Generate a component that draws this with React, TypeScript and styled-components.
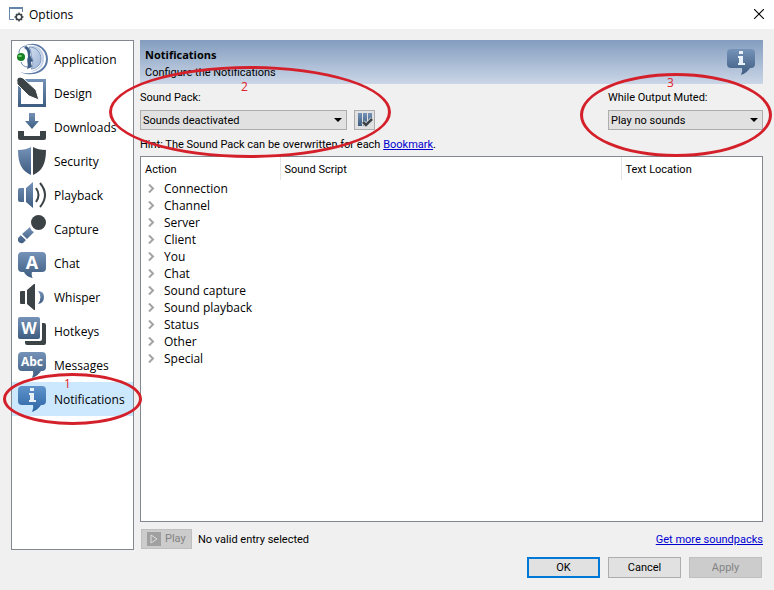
import React, { useState } from "react";
import styled, { createGlobalStyle } from "styled-components";

const STEEL = "url(#steel)";
const DARK = "#3c4347";

const GlobalStyle = createGlobalStyle`
  * { box-sizing: border-box; }
  body {
    margin: 0;
    background: #f0f0f0;
    color: #000;
    font: 11px/14px Roboto, "Open Sans", sans-serif;
  }
  button, select { font: inherit; color: inherit; }
`;

const uiFont = `"Open Sans", "Noto Sans", sans-serif`;

const Window = styled.div`
  min-height: 100vh;
  display: flex;
  flex-direction: column;
`;

const TitleBar = styled.header`
  display: flex;
  align-items: center;
  gap: 5px;
  height: 29px;
  padding: 0 10px 0 9px;
  background: #fff;
`;

const Title = styled.h1`
  flex: 1;
  margin: 0;
  font-family: ${uiFont};
  font-size: 12px;
  font-weight: 400;
`;

const CloseButton = styled.button`
  display: flex;
  padding: 0 0 2px;
  border: 0;
  background: none;
`;

const Body = styled.div`
  flex: 1;
  display: flex;
  gap: 6px;
  padding: 11px 11px 0;
`;

const Sidebar = styled.nav`
  flex: 0 0 123px;
  padding-top: 1px;
  border: 1px solid #828790;
  background: #fff;
  font-family: ${uiFont};
  font-size: 12px;
`;

const NavItem = styled.button<{ $active?: boolean }>`
  position: relative;
  display: flex;
  align-items: center;
  gap: 6px;
  width: 100%;
  height: 34px;
  padding: 0 0 0 4px;
  border: 0;
  background: ${(p) => (p.$active ? "#cce8ff" : "transparent")};
  text-align: left;
`;

const NavLabel = styled.span`
  padding-top: 2px;
`;

const Main = styled.main`
  flex: 1;
  min-width: 0;
  display: flex;
  flex-direction: column;
`;

const Banner = styled.div`
  display: flex;
  justify-content: space-between;
  align-items: center;
  height: 44px;
  padding: 0 6px 0 5px;
  background: linear-gradient(#839dbf, #cbd6e7);
`;

const BannerText = styled.div`
  padding-top: 3px;
  line-height: 18px;
`;

const Heading = styled.h2`
  margin: 0;
  font-family: ${uiFont};
  font-size: 11px;
  line-height: 18px;
`;

const Settings = styled.div`
  display: flex;
  justify-content: space-between;
  padding-top: 7px;
`;

const Field = styled.div<{ $width: number }>`
  position: relative;
  width: ${(p) => p.$width}px;
`;

const FieldLabel = styled.label`
  display: block;
  margin-bottom: 5px;
`;

const FieldRow = styled.div`
  display: flex;
  gap: 7px;
`;

const SelectBox = styled.div`
  flex: 1;
  display: grid;
  align-items: center;
  & > * { grid-area: 1 / 1; }
  & > svg { justify-self: end; margin-right: 5px; pointer-events: none; }
`;

const Select = styled.select`
  appearance: none;
  width: 100%;
  height: 20px;
  padding: 2px 20px 0 2px;
  border: 1px solid #adadad;
  border-radius: 0;
  background: #e1e1e1;
`;

const ToolButton = styled.button`
  display: flex;
  align-items: center;
  justify-content: center;
  width: 21px;
  height: 20px;
  padding: 0;
  border: 1px solid #adadad;
  background: #e1e1e1;
`;

const Hint = styled.p`
  margin: 8px 0 4px;
`;

const Link = styled.a`
  color: #0000d0;
`;

const TablePane = styled.div`
  flex: 1;
  border: 1px solid #828790;
  background: #fff;
`;

const Table = styled.table`
  width: 100%;
  table-layout: fixed;
  border-collapse: collapse;
`;

const HeadCell = styled.th<{ $width?: number }>`
  width: ${(p) => (p.$width ? `${p.$width}px` : "auto")};
  height: 23px;
  padding: 2px 4px 0;
  font-weight: 400;
  text-align: left;
  & + & { border-left: 1px solid #e5e5e5; }
`;

const Cell = styled.td`
  height: 17px;
  padding: 0;
  font-family: ${uiFont};
  font-size: 12px;
  line-height: 17px;
`;

const Expander = styled.button`
  display: flex;
  align-items: center;
  gap: 9px;
  height: 17px;
  padding: 0 0 0 6px;
  border: 0;
  background: none;
`;

const PlayBar = styled.div`
  display: flex;
  align-items: center;
  gap: 6px;
  padding: 7px 0 1px 1px;
`;

const PlayButton = styled.button`
  display: flex;
  align-items: center;
  gap: 4px;
  width: 51px;
  height: 20px;
  padding: 0 0 0 5px;
  border: 1px solid #bfbfbf;
  background: #ccc;
  color: #838383;
`;

const PlayInfo = styled.div`
  flex: 1;
  display: flex;
  justify-content: space-between;
  padding-top: 2px;
`;

const Footer = styled.footer`
  display: flex;
  justify-content: flex-end;
  gap: 8px;
  padding: 7px 12px 12px;
`;

const DialogButton = styled.button<{ $primary?: boolean }>`
  width: 73px;
  height: 21px;
  padding: 0;
  border: ${(p) => (p.$primary ? "2px solid #0078d7" : "1px solid #adadad")};
  background: #e1e1e1;
  &:disabled {
    border-color: #bfbfbf;
    background: #ccc;
    color: #838383;
  }
`;

const Mark = styled.span<{ $box: [number, number, number, number]; $text: [number, number] }>`
  position: absolute;
  z-index: 1;
  left: ${(p) => p.$box[0]}px;
  top: ${(p) => p.$box[1]}px;
  width: ${(p) => p.$box[2]}px;
  height: ${(p) => p.$box[3]}px;
  padding: ${(p) => p.$text[1]}px 0 0 ${(p) => p.$text[0]}px;
  border: 3px solid #d4202a;
  border-radius: 50%;
  color: #e0202c;
  font-family: ${uiFont};
  font-size: 12px;
  line-height: 12px;
  pointer-events: none;
`;

const Defs = () => (
  <svg width="0" height="0" display="block" aria-hidden>
    <defs>
      <linearGradient id="steel" x1="0" y1="0" x2="0" y2="1">
        <stop offset="0" stopColor="#7593b8" />
        <stop offset="1" stopColor="#3d5c80" />
      </linearGradient>
      <linearGradient id="bright" x1="0" y1="0" x2="0" y2="1">
        <stop offset="0" stopColor="#5f94cc" />
        <stop offset="1" stopColor="#2c64a3" />
      </linearGradient>
      <linearGradient id="face" x1="0" y1="0" x2="1" y2="1">
        <stop offset="0" stopColor="#d3dff0" />
        <stop offset="1" stopColor="#9db4d6" />
      </linearGradient>
    </defs>
  </svg>
);

const Icon = ({ children }: { children: React.ReactNode }) => (
  <svg width="32" height="32" viewBox="0 0 32 32" fill="none" aria-hidden>
    {children}
  </svg>
);

const Bubble = ({ fill = STEEL }: { fill?: string }) => (
  <path
    fill={fill}
    d="M6 3H26Q30 3 30 7V18Q30 22 26 22H25Q22 27 16 29Q18 25 17 22H6Q2 22 2 18V7Q2 3 6 3Z"
  />
);

const InfoBubble = ({ fill }: { fill?: string }) => (
  <Icon>
    <Bubble fill={fill} />
    <path fill="#e8f1fa" d="M14 5h4v3h-4zM13 10h5v7h2v2h-7v-2h1v-5h-1z" />
  </Icon>
);

const icons: Record<string, React.ReactNode> = {
  Application: (
    <Icon>
      <path fill="#5d7ba6" d="M8 3C19-3 32 4 32 16C32 29 17 35 4 29C17 33 30 27 30 16C30 5 18-1 8 3Z" />
      <path fill="#c3d1e6" d="M12 3C22 1 29 8 28 16C28 24 22 28 14 29C22 26 26 22 26 16C26 9 20 4 12 3Z" />
      <path fill="url(#face)" stroke="#7c97bf" strokeWidth="1" d="M13 4C21 4 25 10 25 16C25 22 20 26 15 26C18 23 16 20 17 17C14 13 16 8 13 4Z" />
      <path fill="#3c5c85" d="M10 3C14 5 15 9 14 12L17 18L15 19L16 24L11 26C13 21 10 18 12 14C12 9 11 6 8 5Z" />
      <path stroke="#6c89b0" strokeWidth="1" d="M3 10C3 5 7 3 11 3M5 19C6 22 8 24 12 24" />
      <circle cx="5" cy="14" r="4" fill="#178024" />
      <ellipse cx="4" cy="13" rx="2" ry="1" fill="#79d873" />
    </Icon>
  ),
  Design: (
    <Icon>
      <path fill={STEEL} fillRule="evenodd" d="M2 2H30V30H2ZM5 5V27H27V5Z" />
      <path fill={DARK} stroke="#fff" d="M1 5Q0 1 4 0L7 1L20 13L23 23L13 19L1 7Z" />
    </Icon>
  ),
  Downloads: (
    <Icon>
      <path fill={STEEL} d="M13 2h6v8h4l-7 8-7-8h4z" />
      <path fill={DARK} d="M2 20h6v5h16v-5h6v7q0 2-2 2H4q-2 0-2-2z" />
    </Icon>
  ),
  Security: (
    <Icon>
      <path fill={STEEL} d="M15 2Q10 5 2 5Q2 15 5 21Q8 27 15 30Z" />
      <path fill={DARK} d="M17 2Q22 5 30 5Q30 15 27 21Q24 27 17 30Z" />
    </Icon>
  ),
  Playback: (
    <Icon>
      <path fill={STEEL} d="M4 9h4v14H4q-2 0-2-2V11q0-2 2-2zM10 9l7-6v26l-7-6z" />
      <path stroke={DARK} strokeWidth="2" d="M20 9Q25 16 20 23M24 4Q34 16 24 28" />
    </Icon>
  ),
  Capture: (
    <Icon>
      <circle cx="22.5" cy="9.5" r="7.5" fill={DARK} />
      <path fill={STEEL} d="M14 14Q15 18 18 19L11 26L6 21ZM5 22L10 27L7 30Q4 31 2 28V25Z" />
      <path stroke="#fff" strokeWidth="1" d="M5 22l6 5" />
    </Icon>
  ),
  Chat: (
    <Icon>
      <path fill={STEEL} d="M6 5H26Q30 5 30 9V21Q30 25 26 25H16Q15 29 17 31Q10 30 8 25H6Q2 25 2 21V9Q2 5 6 5Z" />
      <text x="16" y="22" fill="#fff" fontSize="18" fontWeight="700" textAnchor="middle">A</text>
    </Icon>
  ),
  Whisper: (
    <Icon>
      <path fill={DARK} d="M5 10h4v13H5q-1 0-1-1V11q0-1 1-1zM11 9l7-6h1v26h-1l-7-6z" />
      <path fill={STEEL} d="M22 10Q28 10 28 16Q28 22 22 23Q27 16 22 10Z" />
    </Icon>
  ),
  Hotkeys: (
    <Icon>
      <path fill={DARK} d="M26 8h2q2 0 2 2v18q0 2-2 2H11q-2 0-2-2v-2h15q2 0 2-2z" />
      <rect x="2" y="2" width="22" height="22" rx="2" fill={STEEL} />
      <text x="13" y="19" fill="#fff" fontSize="16" fontWeight="700" textAnchor="middle">W</text>
    </Icon>
  ),
  Messages: (
    <Icon>
      <Bubble />
      <text x="16" y="17" fill="#fff" fontSize="12" fontWeight="700" textAnchor="middle">Abc</text>
    </Icon>
  ),
  Notifications: <InfoBubble fill="url(#bright)" />,
};

const pages = [
  "Application", "Design", "Downloads", "Security", "Playback", "Capture",
  "Chat", "Whisper", "Hotkeys", "Messages", "Notifications",
];

const actions = [
  "Connection", "Channel", "Server", "Client", "You", "Chat",
  "Sound capture", "Sound playback", "Status", "Other", "Special",
];

const DropDown = ({ id, options }: { id: string; options: string[] }) => (
  <SelectBox>
    <Select id={id}>
      {options.map((o) => <option key={o}>{o}</option>)}
    </Select>
    <svg width="8" height="4" viewBox="0 0 8 4" aria-hidden><path d="M0 0h8l-4 4z" /></svg>
  </SelectBox>
);

export default function App() {
  const [page, setPage] = useState("Notifications");
  return (
    <Window>
      <GlobalStyle />
      <Defs />
      <TitleBar>
        <svg width="15" height="15" viewBox="0 0 15 15" fill="none" aria-hidden>
          <path stroke="#6484aa" strokeWidth="1" d="M5 12.5H.5V1.5H13.5V5" />
          <path fill="#6484aa" d="M0 0h14v2H0z" />
          <circle cx="10" cy="10" r="2.8" stroke={DARK} strokeWidth="1.6" />
          <path stroke={DARK} strokeWidth="1.5" d="M10 5.5v2M10 12.5v2M5.5 10h2M12.5 10h2M7 7l1 1M12 12l1 1M13 7l-1 1M8 12l-1 1" />
        </svg>
        <Title>Options</Title>
        <CloseButton aria-label="Close">
          <svg width="10" height="10" viewBox="0 0 10 10" aria-hidden>
            <path stroke="#000" strokeWidth="1.1" d="M0 0l10 10M10 0L0 10" />
          </svg>
        </CloseButton>
      </TitleBar>
      <Body>
        <Sidebar aria-label="Option pages">
          {pages.map((name) => (
            <NavItem key={name} $active={name === page} onClick={() => setPage(name)}>
              {icons[name]}
              <NavLabel>{name}</NavLabel>
              {name === "Notifications" && <Mark $box={[-9, -9, 139, 52]} $text={[58, 2]}>1</Mark>}
            </NavItem>
          ))}
        </Sidebar>
        <Main>
          <Banner>
            <BannerText>
              <Heading>Notifications</Heading>
              Configure the Notifications
            </BannerText>
            <InfoBubble />
          </Banner>
          <Settings>
            <Field $width={235}>
              <FieldLabel htmlFor="pack">Sound Pack:</FieldLabel>
              <FieldRow>
                <DropDown id="pack" options={["Sounds deactivated", "Default Sound Pack"]} />
                <ToolButton aria-label="Check sound pack">
                  <svg width="16" height="16" viewBox="0 0 16 16" fill="none" aria-hidden>
                    <path fill={STEEL} d="M1 1h4v13H1zM6 1h4v13H6zM11 1h4v8h-4z" />
                    <path stroke="#e1e1e1" strokeWidth="4" d="M6 10l3 3 6-6" />
                    <path stroke={DARK} strokeWidth="2.5" d="M6 10l3 3 6-6" />
                  </svg>
                </ToolButton>
              </FieldRow>
              <Mark $box={[-31, -25, 282, 92]} $text={[129, 12]}>2</Mark>
            </Field>
            <Field $width={155}>
              <FieldLabel htmlFor="muted">While Output Muted:</FieldLabel>
              <FieldRow>
                <DropDown id="muted" options={["Play no sounds", "Play all sounds"]} />
              </FieldRow>
              <Mark $box={[-28, -18, 192, 84]} $text={[84, 1]}>3</Mark>
            </Field>
          </Settings>
          <Hint>
            Hint: The Sound Pack can be overwritten for each <Link href="#bookmark">Bookmark</Link>.
          </Hint>
          <TablePane>
            <Table>
              <thead>
                <tr>
                  <HeadCell $width={139}>Action</HeadCell>
                  <HeadCell $width={341}>Sound Script</HeadCell>
                  <HeadCell>Text Location</HeadCell>
                </tr>
              </thead>
              <tbody>
                {actions.map((name) => (
                  <tr key={name}>
                    <Cell>
                      <Expander>
                        <svg width="8" height="9" viewBox="0 0 8 9" fill="none" aria-hidden>
                          <path stroke="#a3a3a3" strokeWidth="2" d="M2 .5l4 4-4 4" />
                        </svg>
                        {name}
                      </Expander>
                    </Cell>
                    <Cell />
                    <Cell />
                  </tr>
                ))}
              </tbody>
            </Table>
          </TablePane>
          <PlayBar>
            <PlayButton disabled>
              <svg width="14" height="14" viewBox="0 0 14 14" fill="none" aria-hidden>
                <path fill="#a0a0a0" d="M0 0h14v14H0z" />
                <path stroke="#ddd" d="M4 3l6 4-6 4z" />
              </svg>
              Play
            </PlayButton>
            <PlayInfo>
              <span>No valid entry selected</span>
              <Link href="#soundpacks">Get more soundpacks</Link>
            </PlayInfo>
          </PlayBar>
        </Main>
      </Body>
      <Footer>
        <DialogButton $primary>OK</DialogButton>
        <DialogButton>Cancel</DialogButton>
        <DialogButton disabled>Apply</DialogButton>
      </Footer>
    </Window>
  );
}
